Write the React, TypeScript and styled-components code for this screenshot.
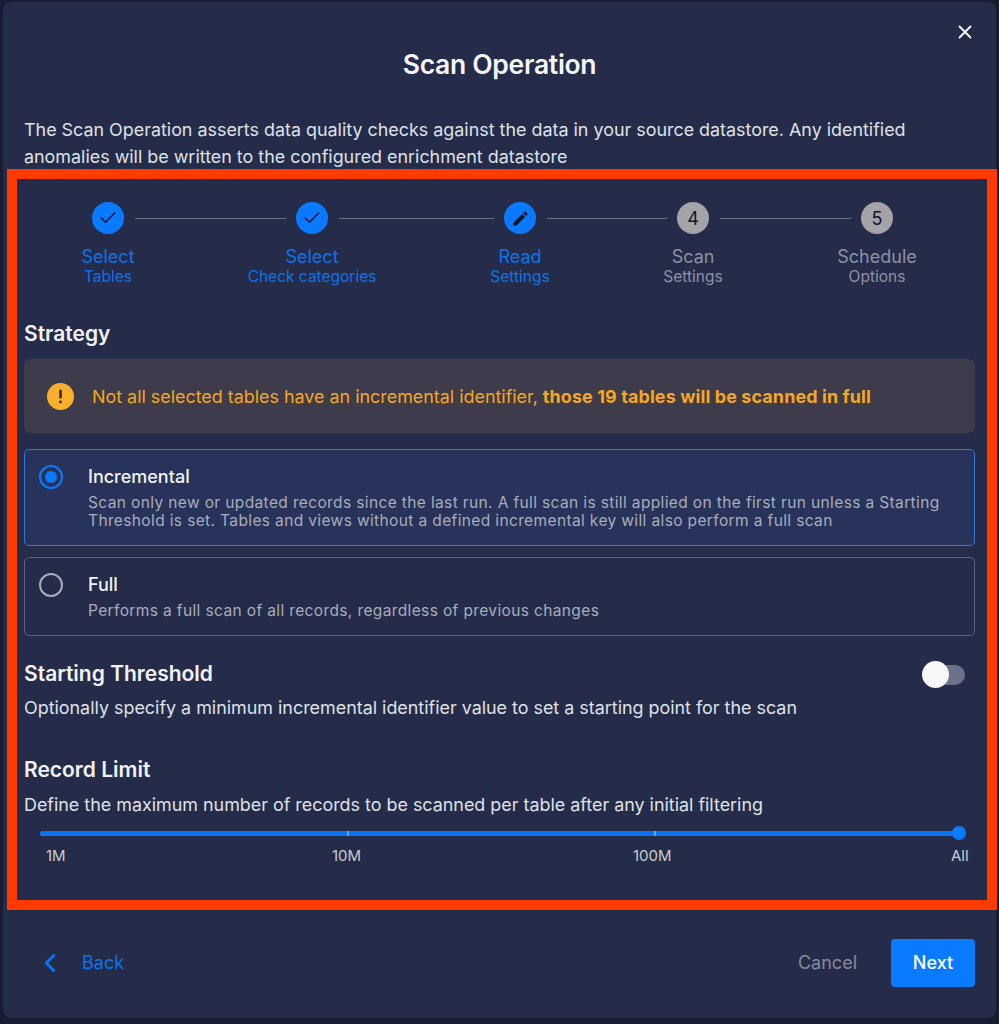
import { Fragment } from "react";
import styled, { createGlobalStyle } from "styled-components";
import { Check, ChevronLeft, X } from "lucide-react";
import { MdEdit } from "react-icons/md";

const GlobalStyle = createGlobalStyle`
	html, body {
		margin: 0;
		padding: 0;
		background: #171c32;
	}
	* {
		box-sizing: border-box;
	}
`;

const Page = styled.div`
	width: 999px;
	height: 1024px;
	padding: 2px 3px 6px;
	overflow: hidden;
	font-family: Inter, "Open Sans", sans-serif;
`;

const Dialog = styled.div`
	position: relative;
	width: 993px;
	height: 1016px;
	background: #252c4a;
	border-radius: 8px;
	display: flex;
	flex-direction: column;
`;

const CloseButton = styled.button`
	position: absolute;
	top: 19px;
	right: 20px;
	padding: 0;
	display: flex;
	border: none;
	background: none;
	color: #fff;
`;

const Title = styled.h2`
	margin: 0;
	height: 114px;
	padding-top: 43px;
	font-size: 26.5px;
	line-height: 38px;
	font-weight: 600;
	letter-spacing: -0.3px;
	text-align: center;
	color: #f4f5f7;
`;

const Intro = styled.p`
	margin: 0;
	height: 53px;
	padding: 0 21px;
	font-size: 17.9px;
	line-height: 27px;
	color: #dfe1e6;
`;

const Highlight = styled.section`
	width: 990px;
	height: 741px;
	margin-left: 4px;
	border: 10px solid #ff3b00;
	padding: 23px 12px 0 7px;
	flex: none;
`;

const Stepper = styled.div`
	display: flex;
	padding-left: 68px;
	height: 118px;
`;

const Step = styled.div`
	width: 32px;
	flex: none;
	display: flex;
	flex-direction: column;
	align-items: center;
`;

const StepCircle = styled.div<{ $active: boolean }>`
	width: 32px;
	height: 32px;
	flex: none;
	border-radius: 50%;
	display: flex;
	align-items: center;
	justify-content: center;
	font-size: 18px;
	background: ${(props) => (props.$active ? "#0a7aff" : "#a3a3a8")};
	color: #10152c;
`;

const StepName = styled.span<{ $active: boolean }>`
	margin-top: 11px;
	font-size: 18px;
	line-height: 24px;
	white-space: nowrap;
	color: ${(props) => (props.$active ? "#0a74ee" : "#8d92a3")};
`;

const StepSub = styled.span<{ $active: boolean }>`
	font-size: 15.5px;
	line-height: 16px;
	white-space: nowrap;
	color: ${(props) => (props.$active ? "#0a74ee" : "#8d92a3")};
`;

const Connector = styled.div<{ $width: number }>`
	width: ${(props) => props.$width}px;
	flex: none;
	height: 1px;
	margin: 16px 10px 0 11px;
	background: #6b7183;
`;

const SectionTitle = styled.h3`
	margin: 0;
	font-size: 21px;
	line-height: 28px;
	font-weight: 600;
	color: #f1f2f5;
`;

const Alert = styled.div`
	height: 74px;
	margin: 11px 0 16px;
	padding-left: 23px;
	border-radius: 6px;
	background: #3e3b4a;
	display: flex;
	align-items: center;
	gap: 18px;
	font-size: 17.9px;
	color: #f5a623;

	b {
		font-weight: 700;
		letter-spacing: 0.13px;
	}
`;

const Option = styled.div<{ $selected: boolean; $height: number }>`
	height: ${(props) => props.$height}px;
	padding: 15px 16px 0 14px;
	margin-bottom: 11px;
	border-radius: 5px;
	border: 1px solid ${(props) => (props.$selected ? "#2f78dc" : "#5c6275")};
	background: ${(props) => (props.$selected ? "#27335a" : "transparent")};
	display: flex;
	gap: 25px;
`;

const Radio = styled.div<{ $selected: boolean }>`
	width: 24px;
	height: 24px;
	flex: none;
	border-radius: 50%;
	border: 2px solid ${(props) => (props.$selected ? "#0a7aff" : "#a9adb8")};
	display: flex;
	align-items: center;
	justify-content: center;

	&::after {
		content: "";
		display: ${(props) => (props.$selected ? "block" : "none")};
		width: 12px;
		height: 12px;
		border-radius: 50%;
		background: #0a7aff;
	}
`;

const OptionBody = styled.div`
	display: flex;
	flex-direction: column;
`;

const OptionTitle = styled.span`
	font-size: 18px;
	line-height: 24px;
	font-weight: 500;
	color: #f1f2f5;
`;

const OptionText = styled.span`
	margin-top: 5px;
	font-size: 15.5px;
	line-height: 18px;
	letter-spacing: 0.37px;
	white-space: nowrap;
	color: #a9adb9;
`;

const ThresholdRow = styled.div`
	display: flex;
	justify-content: space-between;
	align-items: flex-start;
	margin-top: 24px;
	padding-right: 10px;
`;

const Switch = styled.div`
	position: relative;
	width: 32px;
	height: 20px;
	margin-top: 5px;
	border-radius: 10px;
	background: #6c7189;

	&::before {
		content: "";
		position: absolute;
		left: -11px;
		top: -4px;
		width: 27px;
		height: 27px;
		border-radius: 50%;
		background: #f8f8fb;
	}
`;

const Description = styled.p<{ $top: number }>`
	margin: ${(props) => props.$top}px 0 0;
	font-size: 17.9px;
	line-height: 24px;
	color: #dfe1e6;
`;

const LimitTitle = styled(SectionTitle)`
	margin-top: 36px;
`;

const Track = styled.div`
	position: relative;
	height: 5px;
	width: 920px;
	margin: 14px 0 0 16px;
	border-radius: 3px;
	background: #0a74f0;
`;

const Tick = styled.span<{ $left: number }>`
	position: absolute;
	top: 0;
	left: ${(props) => props.$left}px;
	width: 2px;
	height: 5px;
	background: #6ba6ee;
`;

const Thumb = styled.span`
	position: absolute;
	top: -5px;
	right: -6px;
	width: 14px;
	height: 14px;
	border-radius: 50%;
	background: #0a7aff;
`;

const Marks = styled.div`
	display: grid;
	grid-template-columns: 286px 301px 318px auto;
	margin: 10px 0 0 22px;
	font-size: 15px;
	line-height: 20px;
	color: #c9ccd4;
`;

const Footer = styled.footer`
	flex: 1;
	display: flex;
	align-items: center;
	padding: 0 21px 4px 32px;
	margin-top: 1px;
`;

const BackButton = styled.button`
	display: flex;
	align-items: center;
	gap: 17px;
	padding: 0;
	border: none;
	background: none;
	font-family: inherit;
	font-size: 18px;
	color: #0a74ee;
`;

const CancelButton = styled.button`
	margin-left: auto;
	padding: 0;
	border: none;
	background: none;
	font-family: inherit;
	font-size: 18px;
	color: #858a9a;
`;

const NextButton = styled.button`
	width: 84px;
	height: 48px;
	margin-left: 34px;
	border: none;
	border-radius: 4px;
	background: #0a7aff;
	font-family: inherit;
	font-size: 18px;
	font-weight: 500;
	color: #fff;
`;

const steps = [
	{ name: "Select", sub: "Tables", state: "done", line: 151 },
	{ name: "Select", sub: "Check categories", state: "done", line: 155 },
	{ name: "Read", sub: "Settings", state: "edit", line: 120 },
	{ name: "Scan", sub: "Settings", state: "4", line: 131 },
	{ name: "Schedule", sub: "Options", state: "5", line: 0 },
];

function WarningIcon() {
	return (
		<svg width="27" height="27" viewBox="0 0 27 27" style={{ flex: "none" }}>
			<circle cx="13.5" cy="13.5" r="13.5" fill="#fbb02d" />
			<rect x="12.2" y="6.5" width="2.6" height="9" rx="1" fill="#3a2c1c" />
			<rect x="12.2" y="17.5" width="2.6" height="2.8" rx="1" fill="#3a2c1c" />
		</svg>
	);
}

function App() {
	return (
		<Page>
			<GlobalStyle />
			<Dialog>
				<CloseButton>
					<X size={22} strokeWidth={2} />
				</CloseButton>
				<Title>Scan Operation</Title>
				<Intro>
					The Scan Operation asserts data quality checks against the data in your source datastore. Any identified
					<br />
					anomalies will be written to the configured enrichment datastore
				</Intro>
				<Highlight>
					<Stepper>
						{steps.map((step) => {
							const active = step.state === "done" || step.state === "edit";
							return (
								<Fragment key={step.sub + step.name}>
									<Step>
										<StepCircle $active={active}>
											{step.state === "done" && <Check size={20} strokeWidth={1.8} />}
											{step.state === "edit" && <MdEdit size={19} />}
											{!active && step.state}
										</StepCircle>
										<StepName $active={active}>{step.name}</StepName>
										<StepSub $active={active}>{step.sub}</StepSub>
									</Step>
									{step.line > 0 && <Connector $width={step.line} />}
								</Fragment>
							);
						})}
					</Stepper>
					<SectionTitle>Strategy</SectionTitle>
					<Alert>
						<WarningIcon />
						<span>
							Not all selected tables have an incremental identifier, <b>those 19 tables will be scanned in full</b>
						</span>
					</Alert>
					<Option $selected $height={97}>
						<Radio $selected />
						<OptionBody>
							<OptionTitle>Incremental</OptionTitle>
							<OptionText>
								Scan only new or updated records since the last run. A full scan is still applied on the first run unless a Starting
								<br />
								Threshold is set. Tables and views without a defined incremental key will also perform a full scan
							</OptionText>
						</OptionBody>
					</Option>
					<Option $selected={false} $height={79}>
						<Radio $selected={false} />
						<OptionBody>
							<OptionTitle>Full</OptionTitle>
							<OptionText>Performs a full scan of all records, regardless of previous changes</OptionText>
						</OptionBody>
					</Option>
					<ThresholdRow>
						<SectionTitle>Starting Threshold</SectionTitle>
						<Switch />
					</ThresholdRow>
					<Description $top={8}>
						Optionally specify a minimum incremental identifier value to set a starting point for the scan
					</Description>
					<LimitTitle>Record Limit</LimitTitle>
					<Description $top={9}>
						Define the maximum number of records to be scanned per table after any initial filtering
					</Description>
					<Track>
						<Tick $left={307} />
						<Tick $left={614} />
						<Thumb />
					</Track>
					<Marks>
						<span>1M</span>
						<span>10M</span>
						<span>100M</span>
						<span>All</span>
					</Marks>
				</Highlight>
				<Footer>
					<BackButton>
						<ChevronLeft size={30} strokeWidth={2.4} />
						Back
					</BackButton>
					<CancelButton>Cancel</CancelButton>
					<NextButton>Next</NextButton>
				</Footer>
			</Dialog>
		</Page>
	);
}

export default App;
